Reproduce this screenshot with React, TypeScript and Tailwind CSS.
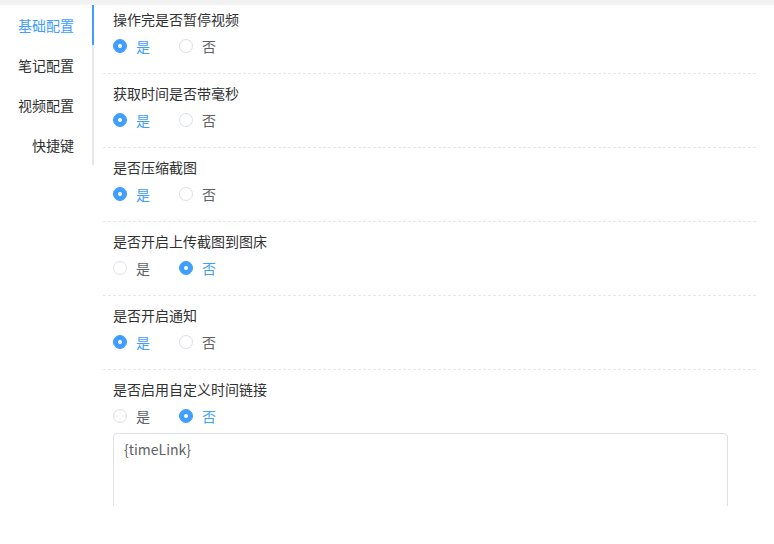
import React from "react";

const items = [
  { title: "操作完是否暂停视频", value: true },
  { title: "获取时间是否带毫秒", value: true },
  { title: "是否压缩截图", value: true },
  { title: "是否开启上传截图到图床", value: false },
  { title: "是否开启通知", value: true },
  { title: "是否启用自定义时间链接", value: false, textarea: true },
];

function Radio({ checked, label }: { checked: boolean; label: string }) {
  return (
    <label className="flex items-center h-5 cursor-pointer">
      {checked ? (
        <span className="w-[14px] h-[14px] rounded-full bg-[#409eff] border border-[#409eff] flex items-center justify-center">
          <span className="w-[4px] h-[4px] rounded-full bg-white" />
        </span>
      ) : (
        <span className="w-[14px] h-[14px] rounded-full bg-white border border-[#dcdfe6]" />
      )}
      <span className={`ml-[9px] text-[14px] leading-5 ${checked ? "text-[#409eff]" : "text-[#606266]"}`}>{label}</span>
    </label>
  );
}

export default function App() {
  const tabs = ["基础配置", "笔记配置", "视频配置", "快捷键"];
  return (
    <div
      className="w-[774px] h-[544px] bg-white overflow-hidden"
      style={{ fontFamily: '"Noto Sans CJK SC", "Microsoft YaHei", sans-serif' }}
    >
      <div className="h-[5px] bg-[#f2f2f2]" />
      <div className="h-[501px] overflow-hidden flex">
        <div className="w-[94px] shrink-0 self-start">
          {tabs.map((t, i) => (
            <div
              key={t}
              className={`h-10 flex items-center justify-end pr-[18px] text-[14px] border-r-2 ${
                i === 0 ? "text-[#409eff] border-[#409eff]" : "text-[#303133] border-[#e4e7ed]"
              }`}
            >
              {t}
            </div>
          ))}
        </div>
        <div className="ml-[9px] w-[653px]">
          {items.map((it, idx) => (
            <div
              key={it.title}
              className={`pl-[10px] ${idx === 0 ? "pt-[4px]" : "pt-[9px]"} pb-[17px] ${
                it.textarea ? "" : "border-b border-dashed border-[#e4e7ed]"
              }`}
            >
              <div className="text-[14px] leading-5 text-[#303133]">{it.title}</div>
              <div className="mt-[7px] flex items-center gap-[29px]">
                <Radio checked={it.value} label="是" />
                <Radio checked={!it.value} label="否" />
              </div>
              {it.textarea && (
                <div className="mt-[7px] w-[615px] h-[100px] border border-[#dcdfe6] rounded-[4px] px-[10px] py-[5px] text-[14px] leading-5 text-[#606266]">
                  {"{timeLink}"}
                </div>
              )}
            </div>
          ))}
        </div>
      </div>
    </div>
  );
}
